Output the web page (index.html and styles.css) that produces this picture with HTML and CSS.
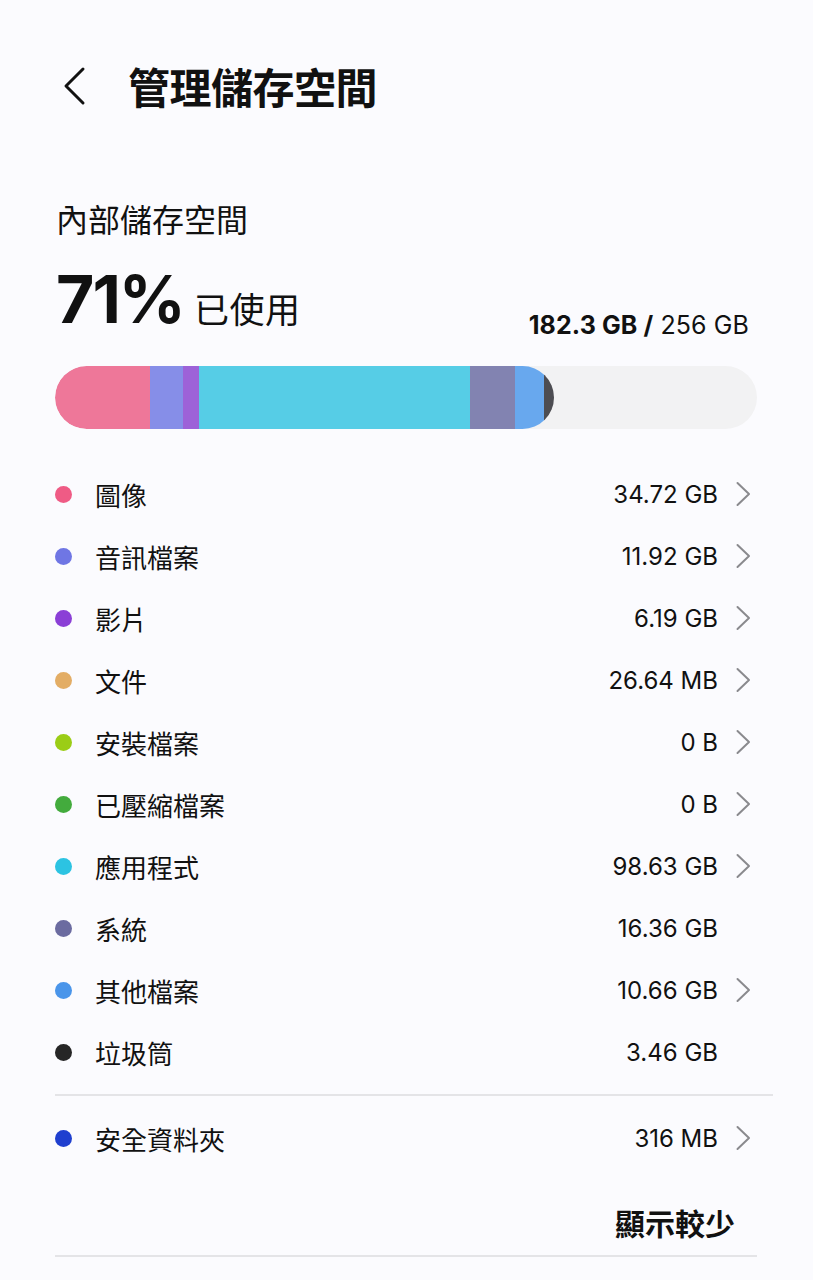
FILE: index.html
```html
<!DOCTYPE html>
<html lang="zh-Hant">
<head>
<meta charset="utf-8">
<title>管理儲存空間</title>
<link rel="stylesheet" href="styles.css">
</head>
<body>
<div class="page">
  <header class="header">
    <svg class="back" width="24" height="40" viewBox="0 0 24 40"><polyline points="20,3 3,20 20,37" fill="none" stroke="#111" stroke-width="3" stroke-linecap="round" stroke-linejoin="round"/></svg>
    <h1 class="title">管理儲存空間</h1>
  </header>

  <div class="section-title">內部儲存空間</div>

  <div class="usage">
    <div class="usage-left"><span class="pct">71%</span><span class="used">已使用</span></div>
    <div class="usage-right"><b>182.3 GB /</b> 256 GB</div>
  </div>

  <div class="bar">
    <div class="fill" style="width:71.1%">
      <span class="seg" style="width:19.04%;background:#ee7799"></span>
      <span class="seg" style="width:6.61%;background:#868ee8"></span>
      <span class="seg" style="width:3.21%;background:#9d62d8"></span>
      <span class="seg" style="width:54.31%;background:#56cde6"></span>
      <span class="seg" style="width:9.02%;background:#8283b1"></span>
      <span class="seg" style="width:5.81%;background:#68a8ee"></span>
      <span class="seg" style="width:2.0%;background:#4d4d52"></span>
    </div>
  </div>

  <ul class="list">
    <li class="row"><span class="dot c-img"></span><span class="label">圖像</span><span class="value">34.72 GB</span><span class="chev"><svg width="15" height="26" viewBox="0 0 15 26"><polyline points="1.5,2 13,13 1.5,24" fill="none" stroke="#8a8a8e" stroke-width="2" stroke-linecap="round" stroke-linejoin="round"/></svg></span></li>
    <li class="row"><span class="dot c-audio"></span><span class="label">音訊檔案</span><span class="value">11.92 GB</span><span class="chev"><svg width="15" height="26" viewBox="0 0 15 26"><polyline points="1.5,2 13,13 1.5,24" fill="none" stroke="#8a8a8e" stroke-width="2" stroke-linecap="round" stroke-linejoin="round"/></svg></span></li>
    <li class="row"><span class="dot c-video"></span><span class="label">影片</span><span class="value">6.19 GB</span><span class="chev"><svg width="15" height="26" viewBox="0 0 15 26"><polyline points="1.5,2 13,13 1.5,24" fill="none" stroke="#8a8a8e" stroke-width="2" stroke-linecap="round" stroke-linejoin="round"/></svg></span></li>
    <li class="row"><span class="dot c-doc"></span><span class="label">文件</span><span class="value">26.64 MB</span><span class="chev"><svg width="15" height="26" viewBox="0 0 15 26"><polyline points="1.5,2 13,13 1.5,24" fill="none" stroke="#8a8a8e" stroke-width="2" stroke-linecap="round" stroke-linejoin="round"/></svg></span></li>
    <li class="row"><span class="dot c-apk"></span><span class="label">安裝檔案</span><span class="value">0 B</span><span class="chev"><svg width="15" height="26" viewBox="0 0 15 26"><polyline points="1.5,2 13,13 1.5,24" fill="none" stroke="#8a8a8e" stroke-width="2" stroke-linecap="round" stroke-linejoin="round"/></svg></span></li>
    <li class="row"><span class="dot c-zip"></span><span class="label">已壓縮檔案</span><span class="value">0 B</span><span class="chev"><svg width="15" height="26" viewBox="0 0 15 26"><polyline points="1.5,2 13,13 1.5,24" fill="none" stroke="#8a8a8e" stroke-width="2" stroke-linecap="round" stroke-linejoin="round"/></svg></span></li>
    <li class="row"><span class="dot c-app"></span><span class="label">應用程式</span><span class="value">98.63 GB</span><span class="chev"><svg width="15" height="26" viewBox="0 0 15 26"><polyline points="1.5,2 13,13 1.5,24" fill="none" stroke="#8a8a8e" stroke-width="2" stroke-linecap="round" stroke-linejoin="round"/></svg></span></li>
    <li class="row"><span class="dot c-sys"></span><span class="label">系統</span><span class="value">16.36 GB</span><span class="chev"></span></li>
    <li class="row"><span class="dot c-other"></span><span class="label">其他檔案</span><span class="value">10.66 GB</span><span class="chev"><svg width="15" height="26" viewBox="0 0 15 26"><polyline points="1.5,2 13,13 1.5,24" fill="none" stroke="#8a8a8e" stroke-width="2" stroke-linecap="round" stroke-linejoin="round"/></svg></span></li>
    <li class="row"><span class="dot c-trash"></span><span class="label">垃圾筒</span><span class="value">3.46 GB</span><span class="chev"></span></li>
  </ul>

  <div class="divider wide"></div>

  <ul class="list secure">
    <li class="row"><span class="dot c-secure"></span><span class="label">安全資料夾</span><span class="value">316 MB</span><span class="chev"><svg width="15" height="26" viewBox="0 0 15 26"><polyline points="1.5,2 13,13 1.5,24" fill="none" stroke="#8a8a8e" stroke-width="2" stroke-linecap="round" stroke-linejoin="round"/></svg></span></li>
  </ul>

  <div class="more-wrap"><span class="more">顯示較少</span></div>

  <div class="divider"></div>
</div>
</body>
</html>
```

FILE: styles.css
```css
* { box-sizing: border-box; }
html, body {
  margin: 0;
  padding: 0;
  background: #fbfbfe;
}
body {
  font-family: "Inter", "Noto Sans CJK TC", sans-serif;
  color: #111111;
  width: 813px;
  height: 1280px;
  overflow: hidden;
}
.page {
  padding: 0 56px 0 55px;
}
.header {
  height: 178px;
  padding-bottom: 6px;
  display: flex;
  align-items: center;
}
.back {
  margin-left: 8px;
  flex: none;
}
.title {
  margin: 0 0 0 41px;
  font-family: "Noto Sans CJK TC", sans-serif;
  font-size: 42px;
  font-weight: 700;
  line-height: 50px;
  letter-spacing: -0.5px;
}
.section-title {
  margin-top: 20px;
  font-family: "Noto Sans CJK TC", sans-serif;
  font-size: 32px;
  line-height: 40px;
  margin-left: 1px;
}
.usage {
  margin-top: 28px;
  display: flex;
  justify-content: space-between;
  align-items: flex-end;
}
.usage-left {
  display: flex;
  align-items: baseline;
}
.pct {
  font-family: "Inter", sans-serif;
  font-size: 66px;
  font-weight: 700;
  line-height: 66px;
  letter-spacing: -2px;
  margin-left: 1px;
}
.used {
  font-family: "Noto Sans CJK TC", sans-serif;
  font-size: 35px;
  margin-left: 10px;
  letter-spacing: 0.5px;
}
.usage-right {
  font-size: 25px;
  line-height: 24px;
  margin-bottom: -4px;
  margin-right: 8px;
  letter-spacing: 0.1px;
}
.usage-right b { font-weight: 700; }
.bar {
  margin-top: 33px;
  height: 63px;
  border-radius: 32px;
  background: #f2f2f3;
  overflow: hidden;
}
.fill {
  height: 100%;
  display: flex;
  border-radius: 32px;
  overflow: hidden;
}
.seg {
  display: block;
  height: 100%;
  flex: none;
}
.list {
  list-style: none;
  margin: 34px 0 0;
  padding: 0;
}
.row {
  height: 62px;
  display: flex;
  align-items: center;
}
.dot {
  width: 17px;
  height: 17px;
  border-radius: 50%;
  flex: none;
}
.label {
  font-family: "Noto Sans CJK TC", sans-serif;
  font-size: 26px;
  margin-left: 23px;
  flex: 1;
}
.value {
  font-size: 24px;
  color: #111;
}
.chev {
  width: 39px;
  height: 26px;
  display: flex;
  justify-content: flex-end;
  padding-right: 6px;
  flex: none;
}
.c-img { background: #ef5b85; }
.c-audio { background: #6f76e4; }
.c-video { background: #8b3fd6; }
.c-doc { background: #e3ad65; }
.c-apk { background: #9bcd16; }
.c-zip { background: #43ab3d; }
.c-app { background: #2cc3e2; }
.c-sys { background: #6b6ba0; }
.c-other { background: #4a95ea; }
.c-trash { background: #262626; }
.c-secure { background: #1f3fcf; }
.divider {
  height: 2px;
  background: #e4e4e7;
}
.divider.wide {
  margin-top: 11px;
  margin-right: -16px;
}
.list.secure {
  margin-top: 11px;
}
.more-wrap {
  margin-top: 33px;
  display: flex;
  justify-content: flex-end;
  padding-right: 22px;
}
.more {
  font-family: "Noto Sans CJK TC", sans-serif;
  font-size: 30px;
  font-weight: 700;
  line-height: 40px;
}
.more-wrap + .divider {
  margin-top: 13px;
}
```
